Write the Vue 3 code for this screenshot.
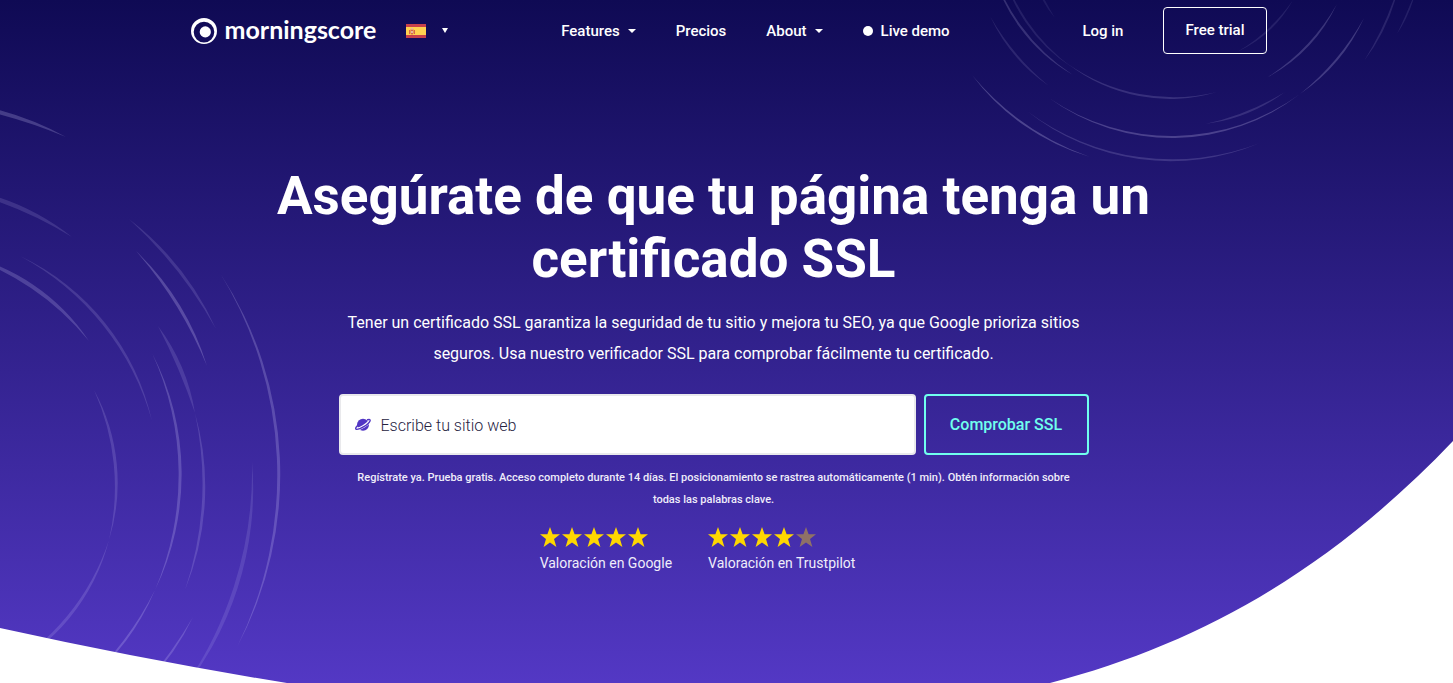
<script setup>
import { ref } from 'vue'

const site = ref('')

// Tapered arc between two points lying on a circle around (cx, cy)
function crescent(cx, cy, [x1, y1, x2, y2, w]) {
  const r = (Math.hypot(x1 - cx, y1 - cy) + Math.hypot(x2 - cx, y2 - cy)) / 2
  const half = Math.hypot(x2 - x1, y2 - y1) / 2
  const s = r - Math.sqrt(r * r - half * half)
  const radius = (h) => ((half * half + h * h) / (2 * h)).toFixed(2)
  const ro = radius(s + w / 2)
  const ri = radius(Math.max(s - w / 2, 0.5))
  return `M${x1} ${y1}A${ro} ${ro} 0 0 1 ${x2} ${y2}A${ri} ${ri} 0 0 0 ${x1} ${y1}Z`
}

const leftArcs = [
  [-80, 100, 66, 137, 4, 0.22],
  [-60, 186, 72, 237, 4, 0.14],
  [20, 256, 152, 421, 3, 0.15],
  [-40, 254, 89, 341, 4, 0.2],
  [129, 219, 216, 329, 3, 0.14],
  [136, 251, 207, 366, 3, 0.24],
  [220, 273, 237, 647, 3, 0.22],
  [158, 326, 195, 413, 4, 0.14],
  [195, 413, 185, 590, 3, 0.17],
  [152, 353, 155, 590, 3, 0.22],
  [155, 590, 85, 683, 2, 0.22],
  [94, 390, 109, 540, 3, 0.16],
  [109, 540, 0, 672, 3, 0.16],
  [252, 461, 175, 700, 4, 0.13],
  [193, 617, 140, 690, 2, 0.2],
].map((a) => ({ d: crescent(-97, 478, a), o: a[5] }))

const rightArcs = [
  [1090, 157, 972, 75, 2, 0.25],
  [1260, 143, 1027, 111, 2, 0.17],
  [1300, 94, 1049, 98, 2, 0.24],
  [1364, 18, 1300, 94, 2, 0.22],
  [1285, 92, 1205, 124, 2, 0.15],
  [1073, 75, 990, -40, 2, 0.18],
  [1217, 92, 1068, 64, 2, 0.16],
  [1073, 68, 1000, -40, 2, 0.1],
  [1049, 86, 990, 16, 2, 0.12],
  [1337, 4, 1268, 77, 2, 0.2],
  [1293, 0, 1237, 52, 2, 0.1],
  [1400, -20, 1364, 61, 2, 0.12],
  [1416, -10, 1397, 34, 2, 0.1],
  [1055, 18, 1035, -20, 2, 0.08],
].map((a) => ({ d: crescent(1171, -76, a), o: a[5] }))

const ratings = [
  { label: 'Valoración en Google', stars: 5 },
  { label: 'Valoración en Trustpilot', stars: 4 },
]
</script>

<template>
  <div class="page">
    <svg class="backdrop" viewBox="0 0 1453 683" preserveAspectRatio="none" aria-hidden="true">
      <path v-for="(a, i) in leftArcs" :key="'l' + i" :d="a.d" :fill-opacity="a.o" fill="#dcd6ff" />
      <path v-for="(a, i) in rightArcs" :key="'r' + i" :d="a.d" :fill-opacity="a.o" fill="#dcd6ff" />
      <path d="M0 628Q145 660 287 683H0Z" fill="#fff" />
      <path d="M1050 683C1200 644 1330 570 1453 441V683Z" fill="#fff" />
    </svg>

    <header class="bar">
      <div class="brand">
        <a class="logo" href="#">
          <svg width="26" height="26" viewBox="0 0 26 26" aria-hidden="true">
            <path fill="#fff" fill-rule="evenodd" d="M13 0a13 13 0 1 0 0 26a13 13 0 1 0 0-26ZM13 3.800a10.300 10.300 0 1 1 0 20.600a10.300 10.300 0 1 1 0-20.600Z" />
            <circle cx="14.300" cy="13.900" r="5.600" fill="#fff" />
          </svg>
          <span>morningscore</span>
        </a>
        <button class="lang" type="button" aria-label="Español">
          <svg width="20" height="14" viewBox="0 0 20 14" aria-hidden="true">
            <path fill="#c8414b" d="M0 0h20v14H0z" />
            <path fill="#ffd250" d="M0 3h20v8H0z" />
            <path fill="#c8414b" d="M3 6h1v4H3zM8 6h1v4H8zM4.500 5.500h3V9a1.500 1.500 0 0 1-3 0z" opacity=".75" />
            <path fill="#e7b7a0" d="M5 4h2v1.500H5zM5 7h2v2H5z" />
          </svg>
          <svg width="6" height="5" viewBox="0 0 6 5" aria-hidden="true"><path fill="#fff" d="M0 0h6L3 5z" /></svg>
        </button>
      </div>
      <nav class="menu">
        <a href="#">Features <svg width="8" height="4" viewBox="0 0 8 4" aria-hidden="true"><path fill="#fff" d="M0 0h8L4 4z" /></svg></a>
        <a href="#">Precios</a>
        <a href="#">About <svg width="8" height="4" viewBox="0 0 8 4" aria-hidden="true"><path fill="#fff" d="M0 0h8L4 4z" /></svg></a>
        <a href="#"><i class="dot"></i>Live demo</a>
      </nav>
      <div class="account">
        <a href="#">Log in</a>
        <a class="trial" href="#">Free trial</a>
      </div>
    </header>

    <main class="hero">
      <h1>Asegúrate de que tu página tenga un certificado SSL</h1>
      <p class="lead">Tener un certificado SSL garantiza la seguridad de tu sitio y mejora tu SEO, ya que Google prioriza sitios seguros. Usa nuestro verificador SSL para comprobar fácilmente tu certificado.</p>
      <form class="check" @submit.prevent>
        <label class="field">
          <svg width="16" height="14" viewBox="0 0 16 14" aria-hidden="true">
            <circle cx="8" cy="6.800" r="6" fill="#5236c4" />
            <path fill="none" stroke="#fff" stroke-width="3" d="M1.500 10.800C4 11.500 13 6.500 14.800 2.600" />
            <path fill="none" stroke="#5236c4" stroke-width="1.400" stroke-linecap="round" d="M2.600 7.500C.5 9.500.2 11 1.400 11.300C4.500 11.800 13.500 6.500 15 3C15.500 1.500 14.500 1.300 12.500 1.800" />
          </svg>
          <input v-model="site" type="text" placeholder="Escribe tu sitio web" aria-label="Escribe tu sitio web" />
        </label>
        <button type="submit">Comprobar SSL</button>
      </form>
      <p class="note">Regístrate ya. Prueba gratis. Acceso completo durante 14 días. El posicionamiento se rastrea automáticamente (1 min). Obtén información sobre todas las palabras clave.</p>
      <div class="ratings">
        <div v-for="r in ratings" :key="r.label" class="rating">
          <div class="stars">
            <svg v-for="n in 5" :key="n" :class="{ off: n > r.stars }" width="20" height="20" viewBox="0 0 20 20" aria-hidden="true">
              <path d="M10 0l2.600 7.200H20l-6 4.900L16.400 20L10 15.600L3.600 20L6 12.100L0 7.200h7.400z" />
            </svg>
          </div>
          <span>{{ r.label }}</span>
        </div>
      </div>
    </main>
  </div>
</template>

<style>
body {
  margin: 0;
}
</style>

<style scoped>
.page {
  position: relative;
  min-height: 100vh;
  overflow: hidden;
  box-sizing: border-box;
  background: linear-gradient(#0f0a54, #5338c4);
  color: #fff;
  font-family: Roboto, "Open Sans", sans-serif;
}
.backdrop {
  position: absolute;
  inset: 0;
  width: 100%;
  height: 100%;
}
a {
  color: inherit;
  text-decoration: none;
}
.bar {
  position: relative;
  display: flex;
  justify-content: space-between;
  align-items: center;
  max-width: 1076px;
  margin: 0 auto;
  padding: 7px 0 7px 4px;
  font-size: 15px;
  font-weight: 500;
}
.brand,
.logo,
.lang,
.menu,
.menu a,
.account {
  display: flex;
  align-items: center;
}
.brand {
  gap: 30px;
}
.logo {
  gap: 8px;
  font-family: Lato, sans-serif;
  font-size: 25px;
  font-weight: 700;
  line-height: 28px;
}
.logo span {
  padding-bottom: 4px;
}
.lang {
  gap: 16px;
  padding: 0;
  border: 0;
  background: none;
}
.menu {
  gap: 40px;
  margin-right: 20px;
}
.menu a {
  gap: 8px;
}
.dot {
  width: 10px;
  height: 10px;
  border-radius: 50%;
  background: #fff;
}
.account {
  gap: 40px;
}
.trial {
  padding: 0 21px;
  border: 1px solid #fff;
  border-radius: 4px;
  line-height: 45px;
}
.hero {
  position: relative;
  display: flex;
  flex-direction: column;
  align-items: center;
  max-width: 900px;
  margin: 0 auto;
  padding: 104px 26px 0 0;
  text-align: center;
}
h1 {
  margin: 0;
  font-size: 53px;
  font-weight: 700;
  line-height: 63px;
}
.lead {
  max-width: 750px;
  margin: 16px 0 0;
  font-size: 16px;
  line-height: 31px;
}
.check {
  display: flex;
  gap: 8px;
  width: 750px;
  max-width: 100%;
  margin-top: 25px;
}
.field {
  display: flex;
  flex: 1;
  align-items: center;
  gap: 10px;
  padding: 0 14px;
  border: 2px solid #e9e9ec;
  border-radius: 4px;
  background: #fff;
}
.field input {
  flex: 1;
  padding: 2px 0 0;
  border: 0;
  outline: 0;
  background: none;
  color: #26233f;
  font: 300 16px/24px Roboto, sans-serif;
}
.field input::placeholder {
  color: #26233f;
  opacity: 1;
}
.check button {
  width: 165px;
  height: 61px;
  padding: 0;
  border: 2px solid #70ffee;
  border-radius: 4px;
  background: none;
  color: #70ffee;
  font: 500 16px/24px Roboto, sans-serif;
}
.note {
  max-width: 730px;
  margin: 12px 0 0;
  font-size: 11px;
  font-weight: 500;
  line-height: 22px;
  color: #efedfa;
}
.ratings {
  display: flex;
  gap: 36px;
  margin: 16px 32px 0 0;
}
.rating {
  display: flex;
  flex-direction: column;
  gap: 4px;
  font-size: 14px;
  line-height: 24px;
  color: #efedfa;
}
.stars {
  display: flex;
  gap: 2px;
}
.stars svg {
  fill: #ffd700;
}
.stars .off {
  opacity: 0.4;
}
</style>
